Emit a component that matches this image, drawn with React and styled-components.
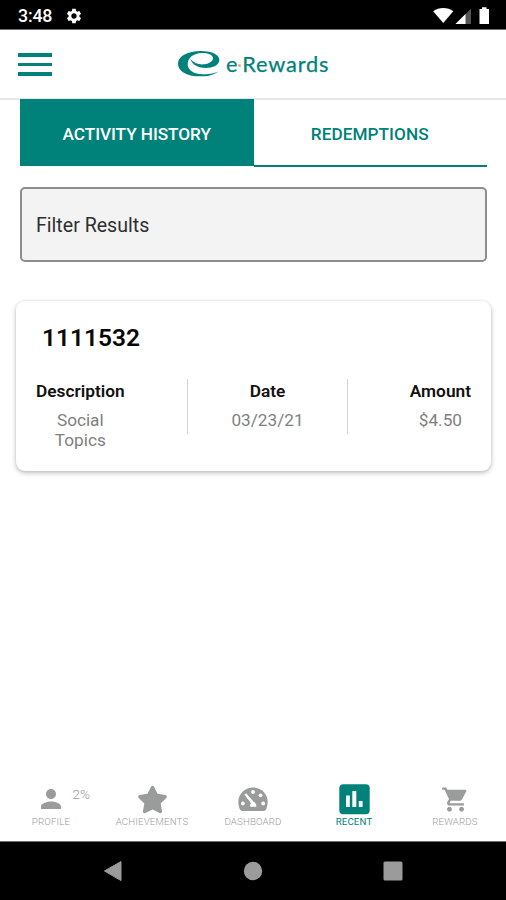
import React, {useState} from 'react';
import styled, {createGlobalStyle} from 'styled-components';
import {MdPerson, MdSettings, MdShoppingCart} from 'react-icons/md';
import {FaStar} from 'react-icons/fa';

const TEAL = '#00827a';
const GREY = '#9a9c9c';

const GlobalStyle = createGlobalStyle`
	* {
		box-sizing: border-box;
	}

	body {
		margin: 0;
		background: #ffffff;
		font-family: Roboto, 'Liberation Sans', sans-serif;
	}

	svg {
		display: block;
	}
`;

const Screen = styled.div`
	display: flex;
	flex-direction: column;
	width: 506px;
	height: 900px;
	overflow: hidden;
	background: #ffffff;
`;

const StatusBar = styled.div`
	display: flex;
	align-items: center;
	height: 30px;
	padding: 2px 16px 0 18px;
	background: #000000;
	border-bottom: 1px solid #6d6d6d;
	color: #ffffff;
`;

const Clock = styled.span`
	width: 47px;
	font-size: 17.8px;
	line-height: 20px;
	font-weight: 500;
	letter-spacing: -0.2px;
`;

const StatusIcons = styled.div`
	margin-left: auto;
`;

const Header = styled.header`
	display: grid;
	grid-template-columns: 160px 1fr;
	align-items: center;
	height: 70px;
	padding: 0 18px;
	border-bottom: 2px solid #e6e6e6;
`;

const MenuButton = styled.button`
	display: flex;
	flex-direction: column;
	gap: 6px;
	width: 34px;
	padding: 0;
	margin-top: 1px;
	border: none;
	background: none;
`;

const MenuLine = styled.span`
	height: 3.6px;
	background: ${TEAL};
`;

const Brand = styled.div`
	display: flex;
	align-items: center;
	gap: 6px;
`;

const BrandName = styled.span`
	color: ${TEAL};
	font-family: Lato, sans-serif;
	font-size: 21.8px;
	font-weight: 400;
	line-height: 26px;
	letter-spacing: 0.8px;
	-webkit-text-stroke: 0.25px ${TEAL};
	white-space: nowrap;
`;

const BrandDot = styled.span`
	display: inline-block;
	width: 3px;
	height: 3px;
	margin: 0 1px 0 0;
	border-radius: 50%;
	background: #f5a08c;
	vertical-align: 5px;
`;

const Main = styled.main`
	flex: 1;
`;

const Tabs = styled.div`
	display: flex;
	height: 68px;
	margin: -1px 19px 0 20px;
`;

const Tab = styled.button`
	width: 233.5px;
	height: ${({active}) => (active ? '67px' : '68px')};
	padding: ${({active}) => (active ? '3px 0 0' : '4px 1px 0 0')};
	border: none;
	border-bottom: ${({active}) => (active ? 'none' : `2px solid ${TEAL}`)};
	background: ${({active}) => (active ? TEAL : 'transparent')};
	color: ${({active}) => (active ? '#ffffff' : TEAL)};
	font-family: inherit;
	font-size: 17.2px;
	font-weight: 500;
	line-height: 20px;
	letter-spacing: ${({active}) => (active ? '-0.05px' : '0.05px')};
`;

const Filter = styled.div`
	display: flex;
	align-items: center;
	height: 75px;
	margin: 20px 19px 0 20px;
	padding: 1px 14px 0;
	border: 2px solid #8c8e8d;
	border-radius: 5px;
	background: #f3f3f3;
	color: #2f2f2f;
	font-size: 19.6px;
`;

const Card = styled.section`
	height: 170px;
	margin: 39px 15px 0 16px;
	padding: 23px 20px 0;
	border-radius: 9px;
	background: #ffffff;
	box-shadow: 0 2px 5px rgba(0, 0, 0, 0.25), 0 0 3px rgba(0, 0, 0, 0.08);
`;

const CardTitle = styled.h2`
	margin: 0 0 0 6px;
	font-size: 24.5px;
	line-height: 28px;
	font-weight: 600;
	color: #080808;
`;

const Details = styled.div`
	display: flex;
	align-items: flex-start;
	margin-top: 27px;
`;

const Detail = styled.div`
	display: flex;
	justify-content: ${({align}) => align};
	width: ${({width}) => width}px;
	height: 55px;
	border-right: ${({divided}) => (divided ? '1px solid #d3d3d3' : 'none')};
`;

const DetailText = styled.div`
	text-align: center;
`;

const DetailLabel = styled.div`
	margin-top: 2px;
	color: #111111;
	font-size: 17.3px;
	line-height: 20px;
	font-weight: 600;
`;

const DetailValue = styled.div`
	width: ${({narrow}) => (narrow ? '60px' : 'auto')};
	margin: 9px auto 0;
	color: #7f7f7f;
	font-size: 17.2px;
	line-height: 20px;
`;

const TabBar = styled.nav`
	display: grid;
	grid-template-columns: repeat(5, 101px);
	height: 59px;
	padding: 1px 0 0 0.5px;
`;

const TabItem = styled.div`
	position: relative;
	display: flex;
	flex-direction: column;
	align-items: center;
	color: ${({active}) => (active ? TEAL : GREY)};
`;

const IconBox = styled.div`
	display: flex;
	align-items: center;
	justify-content: center;
	height: 32px;
`;

const TabLabel = styled.span`
	margin-top: 1px;
	font-size: 9.7px;
	line-height: 12px;
	font-weight: ${({active}) => (active ? 400 : 300)};
	letter-spacing: 0.15px;
`;

const Percent = styled.span`
	position: absolute;
	top: 3px;
	left: 72px;
	font-size: 13.5px;
	line-height: 16px;
	font-weight: 300;
`;

const SystemBar = styled.div`
	display: grid;
	grid-template-columns: repeat(3, 140px);
	justify-content: center;
	justify-items: center;
	align-items: center;
	height: 59px;
	border-top: 1px solid #6d6d6d;
	background: #000000;
`;

const StatusGlyphs = () => (
	<svg width="57" height="18" viewBox="433 6 57 18" fill="#ffffff">
		<path d="M433.2 10.2C439 5.8 447.500 5.800 453.300 10.200L443.250 22Z" />
		<path d="M471 7.500V23H455.500Z" fill="#555555" />
		<path d="M465.500 13V23H455.500Z" />
		<path d="M479.500 8H482V6.200H486.500V8H489V23H479.500Z" />
	</svg>
);

const Swoosh = () => (
	<svg width="42" height="26" viewBox="0 0 126 78" fill={TEAL}>
		<path d="M120 62C105 73 86 76 65 76C25 76 0 60 0 38C0 15 30 0 68 0C105 0 124 12 124 27C124 42 105 51 84 51C62 51 44 43 37 25C50 38 64 42 79 40C95 38 105 31 105 22C105 12 91 5 72 6C46 7 29 20 29 40C29 58 48 70 74 70C91 70 105 68 120 62Z" />
	</svg>
);

const GaugeIcon = () => (
	<svg width="30" height="25" viewBox="0 0 30 25">
		<path
			d="M15 .5C6.700 .500 .300 7 .300 15C.300 18.200 1.100 20.800 2.200 22.800Q2.900 24 4.300 24H25.700Q27.100 24 27.800 22.800C28.900 20.800 29.700 18.200 29.700 15C29.700 7 23.300 .500 15 .500Z"
			fill="currentColor"
		/>
		<g fill="#ffffff">
			<circle cx="15" cy="5" r="1.900" />
			<circle cx="22.500" cy="8.300" r="1.900" />
			<circle cx="4.800" cy="16.500" r="1.900" />
			<circle cx="25.200" cy="16.500" r="1.900" />
			<path d="M6.300 7.500L8.200 6.200L15.600 14.800C17.600 15.500 18.700 17.500 18.200 19.800H12.200C11.800 18.200 12.200 17 13 16.300Z" />
		</g>
	</svg>
);

const ChartIcon = () => (
	<svg width="31" height="31" viewBox="0 0 31 31">
		<rect x=".3" y=".3" width="30.400" height="30" rx="4" fill="currentColor" />
		<path d="M7 11.500H10.800V23H7ZM13.300 7H17.300V23H13.300ZM19.800 17H23.600V23H19.800Z" fill="#ffffff" />
	</svg>
);

const items = [
	{label: 'PROFILE', icon: <MdPerson size={30} />, percent: '2%'},
	{label: 'ACHIEVEMENTS', icon: <FaStar size={31} />},
	{label: 'DASHBOARD', icon: <GaugeIcon />},
	{label: 'RECENT', icon: <ChartIcon />, active: true},
	{label: 'REWARDS', icon: <MdShoppingCart size={29} />}
];

const App = function() {
	const [tab, setTab] = useState('history');

	return (
		<Screen>
			<GlobalStyle />
			<StatusBar>
				<Clock>3:48</Clock>
				<MdSettings size={18} />
				<StatusIcons>
					<StatusGlyphs />
				</StatusIcons>
			</StatusBar>

			<Header>
				<MenuButton aria-label="Menu">
					<MenuLine />
					<MenuLine />
					<MenuLine />
				</MenuButton>
				<Brand>
					<Swoosh />
					<BrandName>
						e<BrandDot />Rewards
					</BrandName>
				</Brand>
			</Header>

			<Main>
				<Tabs>
					<Tab active={tab === 'history'} onClick={() => setTab('history')}>
						ACTIVITY HISTORY
					</Tab>
					<Tab active={tab === 'redemptions'} onClick={() => setTab('redemptions')}>
						REDEMPTIONS
					</Tab>
				</Tabs>

				<Filter>Filter Results</Filter>

				<Card>
					<CardTitle>1111532</CardTitle>
					<Details>
						<Detail width={152} align="flex-start" divided>
							<DetailText>
								<DetailLabel>Description</DetailLabel>
								<DetailValue narrow>Social Topics</DetailValue>
							</DetailText>
						</Detail>
						<Detail width={160} align="center" divided>
							<DetailText>
								<DetailLabel>Date</DetailLabel>
								<DetailValue>03/23/21</DetailValue>
							</DetailText>
						</Detail>
						<Detail width={123} align="flex-end">
							<DetailText>
								<DetailLabel>Amount</DetailLabel>
								<DetailValue>$4.50</DetailValue>
							</DetailText>
						</Detail>
					</Details>
				</Card>
			</Main>

			<TabBar>
				{items.map(({label, icon, percent, active}) => (
					<TabItem key={label} active={active}>
						<IconBox>{icon}</IconBox>
						{percent && <Percent>{percent}</Percent>}
						<TabLabel active={active}>{label}</TabLabel>
					</TabItem>
				))}
			</TabBar>

			<SystemBar>
				<svg width="20" height="22" viewBox="0 0 20 22">
					<path d="M1.500 11L18 1.500V20.500Z" fill="#9b9b9b" stroke="#9b9b9b" strokeLinejoin="round" />
				</svg>
				<svg width="20" height="20" viewBox="0 0 20 20">
					<circle cx="10" cy="10" r="9.200" fill="#9b9b9b" />
				</svg>
				<svg width="20" height="20" viewBox="0 0 20 20">
					<rect x=".5" y=".5" width="19" height="19" rx="1.500" fill="#9b9b9b" />
				</svg>
			</SystemBar>
		</Screen>
	);
};

export default App;
